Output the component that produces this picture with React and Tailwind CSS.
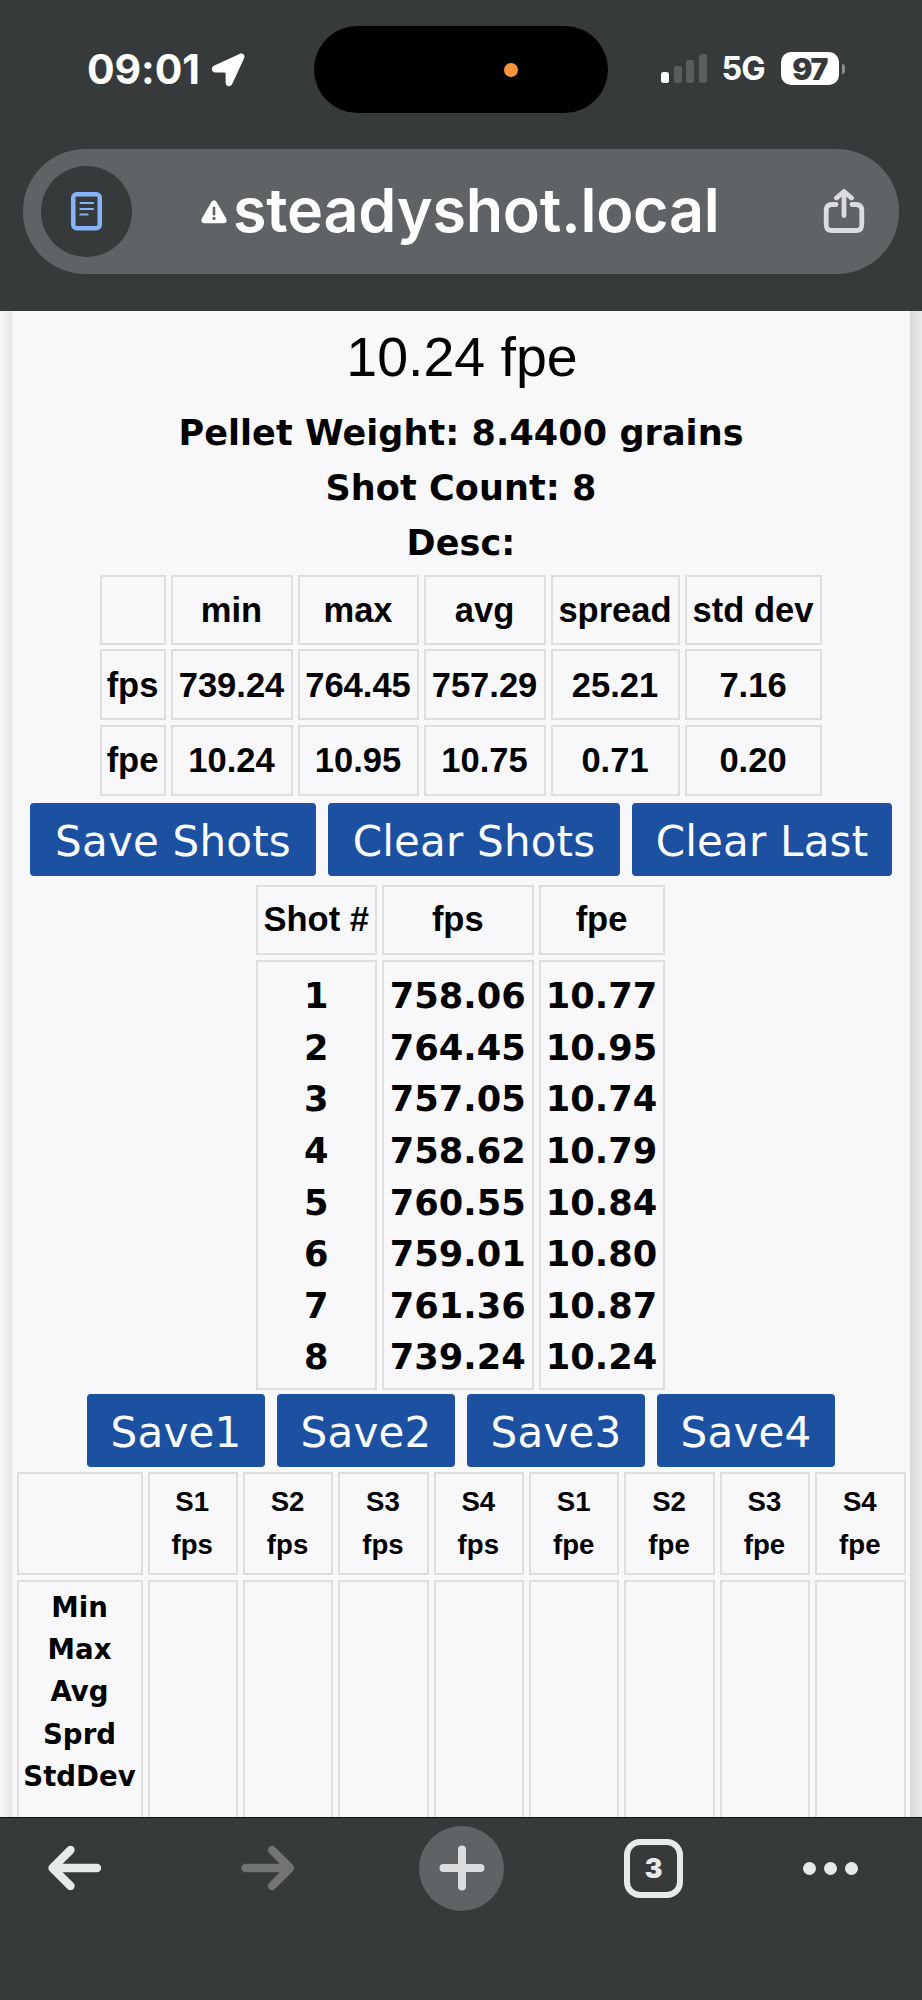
const stats = [
    ["", "min", "max", "avg", "spread", "std dev"],
    ["fps", "739.24", "764.45", "757.29", "25.21", "7.16"],
    ["fpe", "10.24", "10.95", "10.75", "0.71", "0.20"]
];

const shots = [
    { fps: "758.06", fpe: "10.77" },
    { fps: "764.45", fpe: "10.95" },
    { fps: "757.05", fpe: "10.74" },
    { fps: "758.62", fpe: "10.79" },
    { fps: "760.55", fpe: "10.84" },
    { fps: "759.01", fpe: "10.80" },
    { fps: "761.36", fpe: "10.87" },
    { fps: "739.24", fpe: "10.24" }
];

const savedColumns = ["fps", "fpe"].flatMap(unit =>
    ["S1", "S2", "S3", "S4"].map(slot => ({ slot, unit }))
);

const savedRows = ["Min", "Max", "Avg", "Sprd", "StdDev"];

function StatusBar() {
    return (
        <div className="flex h-[149px] items-start pt-[26px] font-['Inter',sans-serif] text-white">
            <div className="flex h-[87px] w-[314px] items-center pl-[87px]">
                <span className="w-[118px] whitespace-nowrap text-[41px] font-bold leading-none tracking-[-0.1px]">09:01</span>
                <svg className="ml-[6px]" width="34" height="34" viewBox="0 0 34 34" fill="white">
                    <path d="M28.5 1 3.4 12.6C-.6 14.6.4 19.4 4.6 19.4H13.4Q14.6 19.4 14.6 20.6V29.4C14.6 33.8 19.6 34.8 21.4 30.6L33 5.4C34.4 2 31.8-.4 28.5 1Z" />
                </svg>
            </div>
            <div className="flex h-[87px] w-[294px] items-center rounded-full bg-black pl-[190px]">
                <span className="size-[14px] rounded-full bg-[#fc923d]" />
            </div>
            <div className="flex h-[87px] items-center pb-[2px] pl-[53px]">
                <div className="flex h-[29px] items-end gap-[4.5px]">
                    <span className="h-[11px] w-[8px] rounded-[2.5px] bg-white" />
                    <span className="h-[17px] w-[8px] rounded-[2.5px] bg-[#5b5e5f]" />
                    <span className="h-[23px] w-[8px] rounded-[2.5px] bg-[#5b5e5f]" />
                    <span className="h-[29px] w-[8px] rounded-[2.5px] bg-[#5b5e5f]" />
                </div>
                <span className="ml-[15px] mt-[2px] w-[46px] text-[32.5px] font-bold leading-none tracking-[-0.9px]">5G</span>
                <div className="ml-[13px] flex h-[33px] w-[58px] items-center justify-center rounded-[10px] bg-white text-[30px] font-black leading-none tracking-[-1.4px] text-[#37393a]">97</div>
                <span className="ml-[3px] h-[10px] w-[3px] rounded-r-full bg-[#8b8d8e]" />
            </div>
        </div>
    );
}

function AddressBar() {
    return (
        <div className="mx-[23px] flex h-[125px] items-center rounded-[62px] bg-[#5f6365] pl-[18px]">
            <div className="flex size-[91px] items-center justify-center rounded-full bg-[#363a3b]">
                <svg width="32" height="39" viewBox="0 0 32 39" fill="none" stroke="#86b3fa">
                    <rect x="2.25" y="2.25" width="26.5" height="34" rx="3.5" strokeWidth="4.5" />
                    <path d="M9.5 11H22M9.5 17H22M9.5 22.5H16.5" strokeWidth="2.2" strokeLinecap="round" />
                </svg>
            </div>
            <svg className="ml-[69px] mt-[1px]" width="26" height="24" viewBox="0 0 26 24">
                <path d="M10.3 2.2Q13-1.8 15.7 2.2L25 18.2Q27 23 22.4 23.2H3.6Q-1 23 1 18.2Z" fill="white" />
                <path d="M13 8V14.2" stroke="#5f6365" strokeWidth="2.6" strokeLinecap="round" />
                <circle cx="13" cy="18.4" r="1.6" fill="#5f6365" />
            </svg>
            <span className="-mt-[3px] ml-[6px] w-[491px] whitespace-nowrap font-['Inter',sans-serif] text-[61px] font-semibold leading-none tracking-[-0.2px] text-white">steadyshot.local</span>
            <svg className="ml-[99px]" width="42" height="45" viewBox="0 0 42 45" fill="none" stroke="#dbdddf" strokeWidth="4.8" strokeLinecap="round" strokeLinejoin="round">
                <path d="M13 15.5H9Q3.2 15.5 3.2 21.3V35.7Q3.2 41.5 9 41.5H33Q38.8 41.5 38.8 35.7V21.3Q38.8 15.5 33 15.5H29" />
                <path d="M21 26.5V3.5M13.5 9 21 2.5 28.5 9" />
            </svg>
        </div>
    );
}

function Cell({ className = "", children }) {
    return (
        <div className={`flex flex-col items-center justify-center whitespace-nowrap border-2 border-[#dedee0] ${className}`}>
            {children}
        </div>
    );
}

function Button({ className = "", children }) {
    return (
        <button className={`h-[73px] whitespace-nowrap rounded-[4px] bg-[#1c50a1] text-center font-['DejaVu_Sans',sans-serif] text-[42px] leading-[77px] tracking-[0.2px] text-white ${className}`}>
            {children}
        </button>
    );
}

function Readings() {
    return (
        <main className="flex h-[1506px] overflow-hidden bg-[#f8f8fb] text-black">
            <div className="w-[12px] shrink-0 bg-linear-to-r from-[#f7f7f8] to-[#e6e6e7]" />
            <div className="flex w-[898px] shrink-0 flex-col items-center">
                <h1 className="mt-[13px] h-[66px] pl-[2px] font-['Liberation_Sans',sans-serif] text-[55.5px] leading-[66px]">10.24 fpe</h1>
                <div className="mt-[16px] text-center font-['DejaVu_Sans',sans-serif] text-[35px] font-bold leading-[55.2px] tracking-[0.08px]">
                    <p>Pellet Weight: 8.4400 grains</p>
                    <p>Shot Count: 8</p>
                    <p>Desc:</p>
                </div>

                <div className="mt-[3px] grid grid-cols-[66px_122px_121px_122px_129px_137px] grid-rows-[70px_71px_71px] gap-x-[5px] gap-y-[4.5px] font-['Liberation_Sans',sans-serif] text-[34.5px] font-bold">
                    {stats.flat().map((value, i) => <Cell key={i} className="pr-[1px] pt-[2px]">{value}</Cell>)}
                </div>

                <div className="mt-[7px] flex gap-[12px]">
                    <Button className="w-[286px]">Save Shots</Button>
                    <Button className="w-[292px]">Clear Shots</Button>
                    <Button className="w-[260px]">Clear Last</Button>
                </div>

                <div className="mr-[2px] mt-[9px] grid grid-cols-[121.5px_151.5px_126px] grid-rows-[70px_430px] gap-[5px] font-['Liberation_Sans',sans-serif] text-[34.5px] font-bold">
                    <Cell className="pt-[1px]">Shot #</Cell>
                    <Cell className="pt-[1px]">fps</Cell>
                    <Cell className="pt-[1px]">fpe</Cell>
                    <Cell className="pt-[4px] font-['DejaVu_Sans',sans-serif] text-[35.2px] leading-[51.6px]">
                        {shots.map((shot, i) => <span key={i}>{i + 1}</span>)}
                    </Cell>
                    <Cell className="pt-[4px] font-['DejaVu_Sans',sans-serif] text-[35.2px] leading-[51.6px]">
                        {shots.map((shot, i) => <span key={i}>{shot.fps}</span>)}
                    </Cell>
                    <Cell className="pt-[4px] font-['DejaVu_Sans',sans-serif] text-[35.2px] leading-[51.6px]">
                        {shots.map((shot, i) => <span key={i}>{shot.fpe}</span>)}
                    </Cell>
                </div>

                <div className="mt-[4px] flex gap-[12.5px]">
                    <Button className="w-[177.5px]">Save1</Button>
                    <Button className="w-[177.5px]">Save2</Button>
                    <Button className="w-[177.5px]">Save3</Button>
                    <Button className="w-[177.5px]">Save4</Button>
                </div>

                <div className="mt-[5px] grid w-[889px] shrink-0 grid-cols-[126px_repeat(8,1fr)] grid-rows-[103px_300px] gap-[5px] text-[27.6px] font-bold leading-[42.3px]">
                    <Cell />
                    {savedColumns.map(({ slot, unit }) => (
                        <Cell key={slot + unit} className="pr-[1px] pt-[1px] font-['Liberation_Sans',sans-serif]">
                            <span>{slot}</span>
                            <span>{unit}</span>
                        </Cell>
                    ))}
                    <Cell className="justify-start! pt-[5px] font-['DejaVu_Sans',sans-serif]">
                        {savedRows.map(row => <span key={row}>{row}</span>)}
                    </Cell>
                    {savedColumns.map(({ slot, unit }) => <Cell key={slot + unit} />)}
                </div>
            </div>
            <div className="w-[12px] shrink-0 bg-linear-to-r from-[#d8d8d9] to-[#eaeaeb]" />
        </main>
    );
}

function Toolbar() {
    return (
        <nav className="flex h-[183px] items-start border-t border-[#111414] bg-[#373a3b] pt-[7px] text-[#e7eaeb]">
            <div className="flex h-[86px] w-full items-center pl-[47px]">
                <svg width="55" height="46" viewBox="0 0 55 46" fill="none" stroke="currentColor" strokeWidth="8.3" strokeLinecap="round" strokeLinejoin="round">
                    <path d="M50 23H6M23.5 5 5.5 23 23.5 41" />
                </svg>
                <svg className="ml-[138px] text-[#717374]" width="55" height="46" viewBox="0 0 55 46" fill="none" stroke="currentColor" strokeWidth="8.3" strokeLinecap="round" strokeLinejoin="round">
                    <path d="M5.5 23H49.5M32 5 50 23 32 41" />
                </svg>
                <div className="ml-[124px] flex size-[85px] items-center justify-center rounded-full bg-[#5f6365] text-[#dbdddf]">
                    <svg width="46" height="46" viewBox="0 0 46 46" stroke="currentColor" strokeWidth="8" strokeLinecap="round">
                        <path d="M4.5 23H41.5M23 4.5V41.5" />
                    </svg>
                </div>
                <div className="ml-[120px] flex size-[59px] items-center justify-center rounded-[16px] border-[6px] border-current pt-[1px] font-['Inter',sans-serif] text-[26.5px] font-black leading-none">3</div>
                <div className="ml-[120px] flex gap-[8px]">
                    <span className="size-[13px] rounded-full bg-current" />
                    <span className="size-[13px] rounded-full bg-current" />
                    <span className="size-[13px] rounded-full bg-current" />
                </div>
            </div>
        </nav>
    );
}

function App() {
    return (
        <div className="flex h-[2000px] w-[922px] flex-col overflow-hidden bg-[#373a3b]">
            <header className="h-[311px] shrink-0">
                <StatusBar />
                <AddressBar />
            </header>
            <Readings />
            <Toolbar />
        </div>
    );
}

export default App;
